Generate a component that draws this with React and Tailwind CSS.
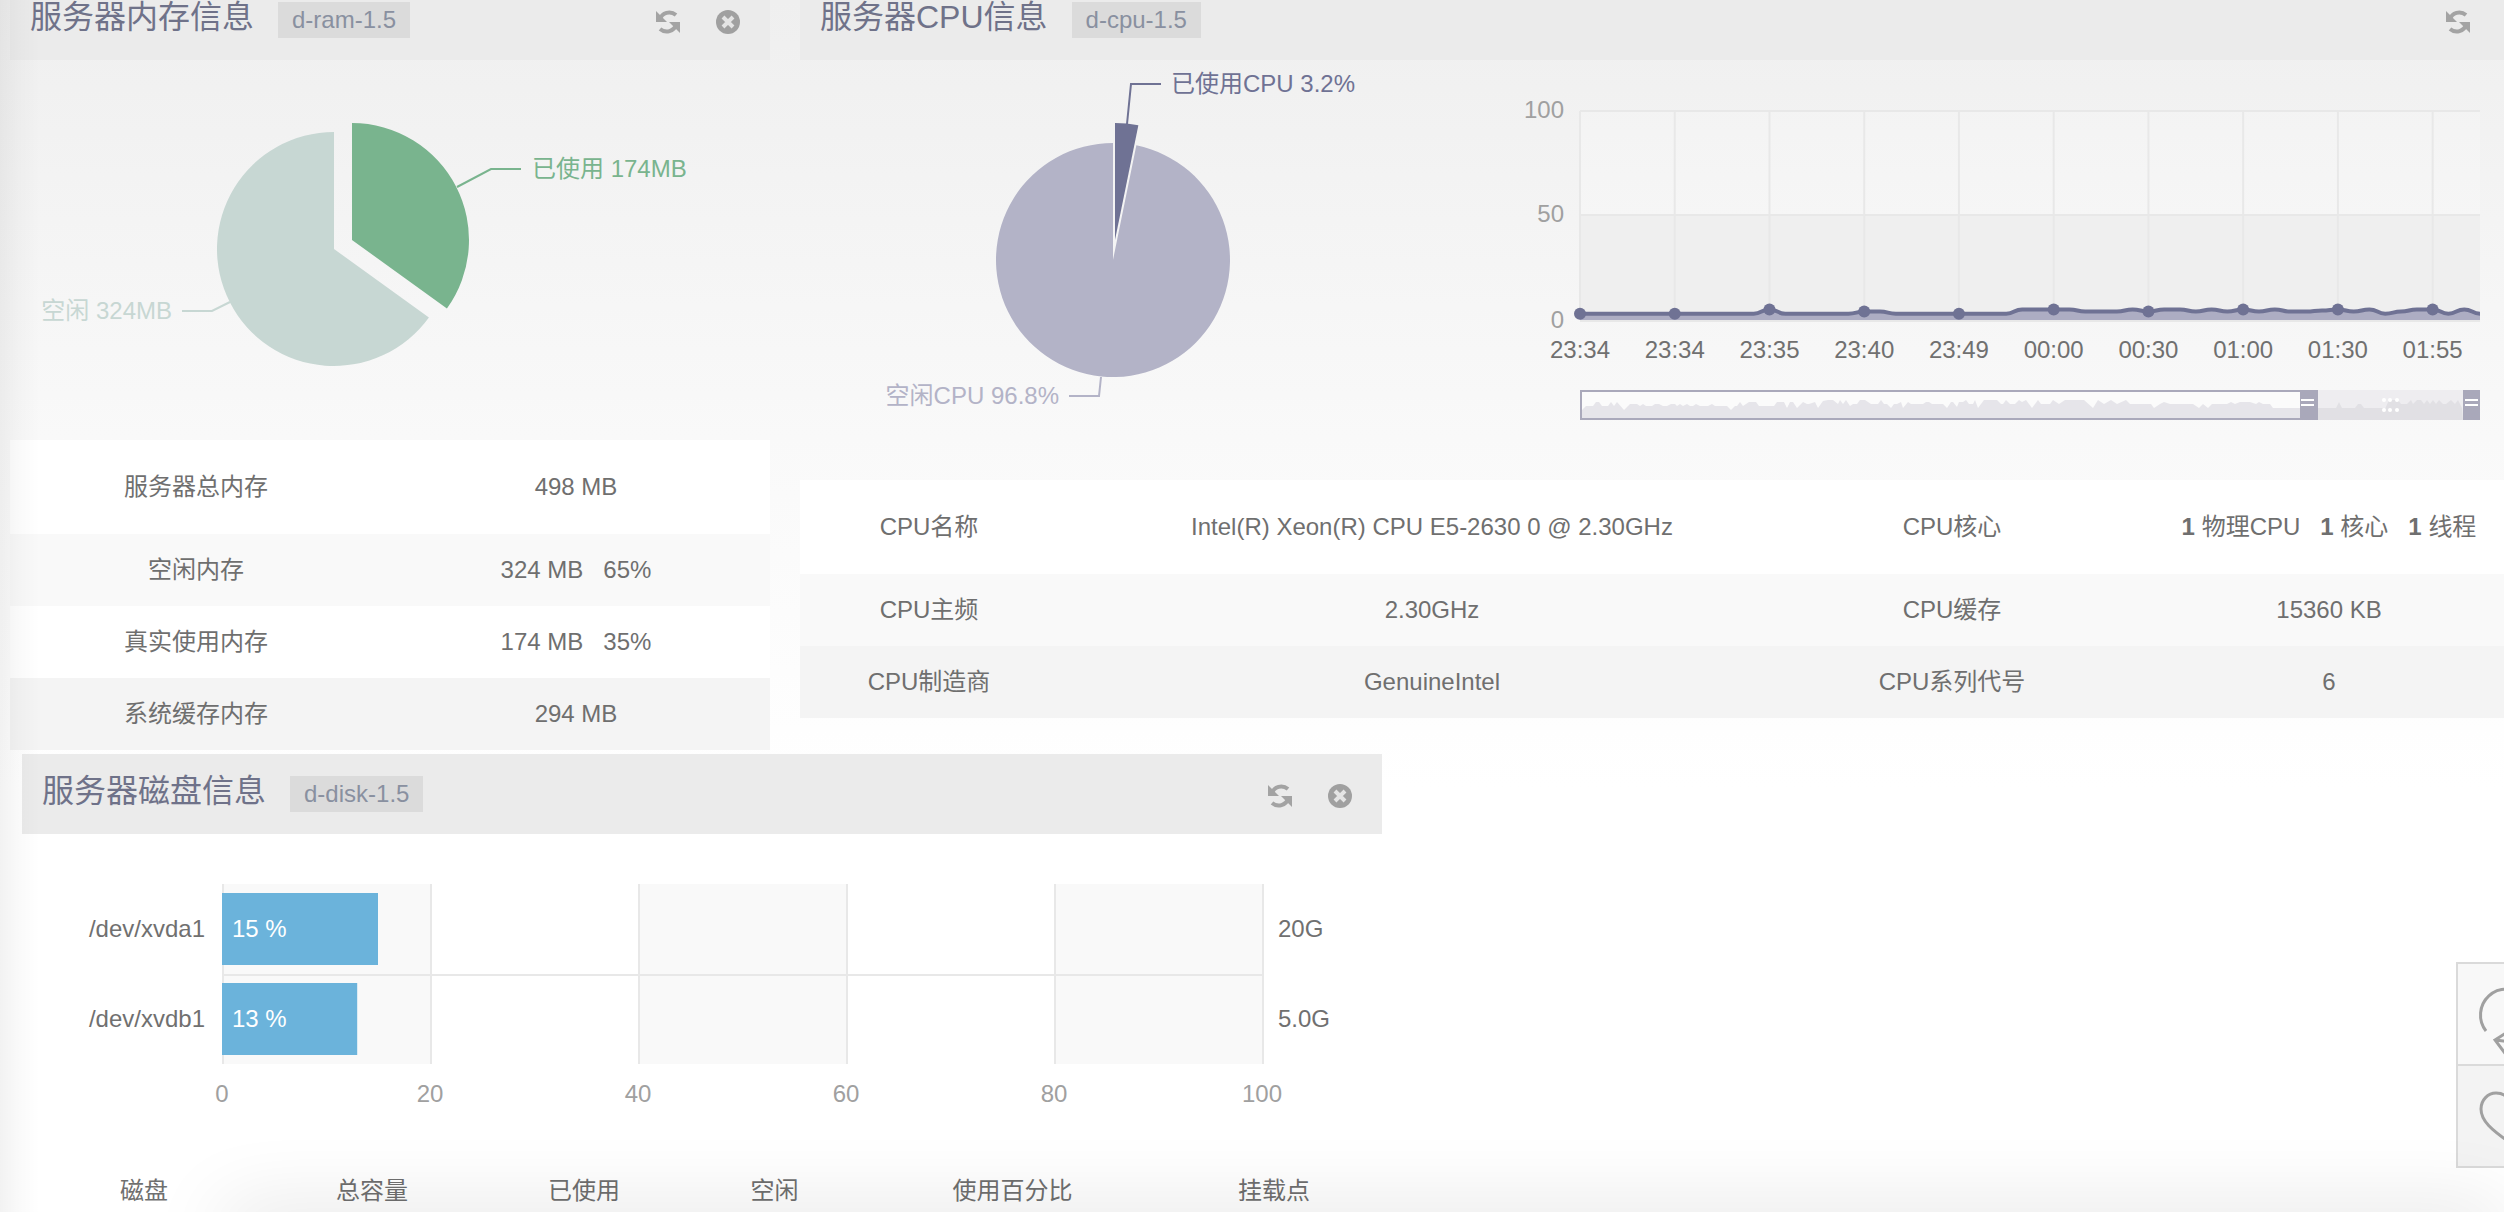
const ramRows = [
  { label: '服务器总内存', values: ['498 MB'] },
  { label: '空闲内存', values: ['324 MB', '65%'] },
  { label: '真实使用内存', values: ['174 MB', '35%'] },
  { label: '系统缓存内存', values: ['294 MB'] },
];

const cpuCores = [
  { count: 1, unit: '物理CPU' },
  { count: 1, unit: '核心' },
  { count: 1, unit: '线程' },
];

const disks = [
  { name: '/dev/xvda1', used: 15, size: '20G' },
  { name: '/dev/xvdb1', used: 13, size: '5.0G' },
];

const diskColumns = [
  { label: '磁盘', width: 'w-[244px]' },
  { label: '总容量', width: 'w-[212px]' },
  { label: '已使用', width: 'w-[212px]' },
  { label: '空闲', width: 'w-[169px]' },
  { label: '使用百分比', width: '' },
  { label: '挂载点', width: 'w-[216px]' },
];

const cpuTimes = ['23:34', '23:34', '23:35', '23:40', '23:49', '00:00', '00:30', '01:00', '01:30', '01:55'];

// cpu load in percent, a time label on every sixth sample
const cpuLoad = [
  3, 3, 3, 3, 3, 3, 3, 3, 3, 3, 3, 3, 5, 3, 3, 3, 3, 3, 4, 4,
  3, 3, 3, 3, 3, 3, 3, 3, 5, 5, 5, 5, 4, 4, 4, 5, 4, 5, 5, 4,
  5, 4, 5, 4, 5, 4, 4, 4.5, 5, 4, 5, 3, 4, 5, 5, 3, 5, 3,
];

// whole history for the zoom bar
const history =
  '2,20 6,16 13,16 16,12 19,12 22,16 28,16 31,12 34,16 37,12 44,20 50,14 57,14 60,16 63,14 66,16 72,16 75,14 79,14 83,16 ' +
  '87,16 91,14 95,14 97,16 100,14 103,16 107,14 110,16 113,16 116,14 120,16 128,16 132,14 135,16 147,16 151,20 155,16 157,16 ' +
  '160,12 163,16 169,12 176,12 179,16 194,16 197,12 204,12 207,18 210,12 213,12 217,18 223,12 227,14 229,14 235,12 238,18 ' +
  '243,11 248,10 253,10 258,14 260,10 263,14 266,10 270,16 273,14 277,14 280,10 285,10 291,14 298,14 301,10 304,14 307,14 ' +
  '311,18 314,14 317,14 321,12 323,18 328,12 331,14 343,14 346,12 349,12 352,14 363,14 367,18 371,12 373,12 377,17 379,12 ' +
  '383,12 386,10 389,14 393,14 395,10 398,18 404,10 417,10 421,14 423,14 426,10 430,14 435,14 439,10 442,12 446,10 452,18 ' +
  '458,10 461,14 470,14 473,10 479,14 485,10 504,10 513,18 518,10 524,14 531,10 537,14 546,10 550,14 571,14 574,18 580,14 ' +
  '584,12 590,14 613,14 619,18 623,14 628,18 632,14 647,14 651,12 655,14 660,12 670,12 676,14 679,12 683,14 690,14 693,18 ' +
  '756,18 759,12 762,18 775,18 778,14 781,14 784,18 802,18 805,19 809,10 818,10 821,14 827,14 831,10 833,14 837,10 841,10 ' +
  '844,14 847,10 850,14 853,10 856,14 859,10 863,14 866,14 871,10 875,14 878,10 882,18';

function RefreshIcon() {
  return (
    <svg viewBox="0 0 24 24" className="size-6" fill="none">
      <path d="M4 9C6 3 14 0 20 5" stroke="#a3a3a3" strokeWidth="4" />
      <path d="M0 1V12H11Z" fill="#a3a3a3" />
      <path d="M20 15C18 21 10 24 4 19" stroke="#a3a3a3" strokeWidth="4" />
      <path d="M24 23V12H13Z" fill="#a3a3a3" />
    </svg>
  );
}

function CloseIcon() {
  return (
    <svg viewBox="0 0 24 24" className="size-6" fill="none">
      <circle cx="12" cy="12" r="12" fill="#a0a0a0" />
      <path d="M7 7L17 17M17 7L7 17" stroke="#e4e4e4" strokeWidth="4" />
    </svg>
  );
}

function PanelHeader({ title, tag }) {
  return (
    <header className="h-20 px-5 flex items-start bg-[#ebebeb]">
      <h2 className="mt-[21px] text-[32px] leading-8 text-[#6f7289]">{title}</h2>
      <span className="mt-[22px] ml-6 px-[14px] text-2xl leading-9 bg-[#dbdbdb] text-[#8990a0]">{tag}</span>
      <div className="mt-[30px] ml-auto mr-[10px] flex gap-9">
        <button type="button" aria-label="刷新" className="cursor-pointer">
          <RefreshIcon />
        </button>
        <button type="button" aria-label="关闭" className="cursor-pointer">
          <CloseIcon />
        </button>
      </div>
    </header>
  );
}

// slice of a pie, angles in degrees clockwise from the top
function slicePath(cx, cy, r, from, to) {
  const point = (deg) => {
    const a = (deg * Math.PI) / 180;
    return `${cx + r * Math.sin(a)} ${cy - r * Math.cos(a)}`;
  };
  return `M${cx} ${cy}L${point(from)}A${r} ${r} 0 ${to - from > 180 ? 1 : 0} 1 ${point(to)}Z`;
}

function RamPie() {
  const split = (174 / 498) * 360;
  return (
    <svg viewBox="0 0 760 380" className="block w-full h-[380px] text-2xl" fill="none" strokeWidth="2">
      <path d={slicePath(324, 189, 117, split, 360)} fill="#c7d7d3" />
      <path d={slicePath(342, 180, 117, 0, split)} fill="#79b48e" />
      <path d="M447 127L481 109H511" stroke="#79b48e" />
      <text x="522" y="117" fill="#79b48e">已使用 174MB</text>
      <path d="M220 242L202 251H172" stroke="#c7d7d3" />
      <text x="162" y="259" textAnchor="end" fill="#c7d7d3">空闲 324MB</text>
    </svg>
  );
}

function CpuPie() {
  const split = 0.032 * 360;
  return (
    <svg viewBox="0 0 700 420" className="block w-full h-[420px] text-2xl" fill="none" strokeWidth="2">
      <path d={slicePath(313, 200, 117, split, 360)} fill="#b3b3c7" />
      <path d={slicePath(315, 180, 117, 0, split)} fill="#6f7294" />
      <path d="M327 64L331 24H361" stroke="#6f7294" />
      <text x="371" y="32" fill="#6f7294">已使用CPU 3.2%</text>
      <path d="M301 317L299 336H269" stroke="#b3b3c7" />
      <text x="259" y="344" textAnchor="end" fill="#b3b3c7">空闲CPU 96.8%</text>
    </svg>
  );
}

function CpuLoadChart() {
  const step = 900 / (cpuLoad.length - 1);
  const px = (i) => 80 + i * step;
  const py = (v) => 260 - v * 2.1;
  const line = cpuLoad
    .map((v, i) => {
      if (i === 0) return `M${px(0)} ${py(v)}`;
      const mid = px(i) - step / 2;
      return `C${mid} ${py(cpuLoad[i - 1])} ${mid} ${py(v)} ${px(i)} ${py(v)}`;
    })
    .join('');

  return (
    <svg viewBox="0 0 1060 420" className="block w-full h-[420px] text-2xl" fill="none">
      <rect x="80" y="51" width="900" height="104" fill="#ffffff" fillOpacity="0.2" />
      <rect x="80" y="155" width="900" height="106" fill="#efefef" />
      <g stroke="#e8e8e8" strokeWidth="2">
        {[51, 155, 261].map((y) => (
          <path key={y} d={`M80 ${y}H980`} />
        ))}
        {cpuTimes.map((t, i) => (
          <path key={i} d={`M${px(i * 6)} 51V260`} />
        ))}
      </g>
      <path d={`${line}V260H80Z`} fill="#adadc3" />
      <path d={line} stroke="#6f7294" strokeWidth="4" />
      {cpuTimes.map((t, i) => (
        <circle key={i} cx={px(i * 6)} cy={py(cpuLoad[i * 6])} r="6" fill="#6f7294" />
      ))}
      <g fill="#a0a0a0" textAnchor="end">
        <text x="64" y="58">100</text>
        <text x="64" y="162">50</text>
        <text x="64" y="268">0</text>
      </g>
      <g fill="#707070" textAnchor="middle">
        {cpuTimes.map((t, i) => (
          <text key={i} x={px(i * 6)} y="298">{t}</text>
        ))}
      </g>

      {/* zoom bar */}
      <g transform="translate(80 330)">
        <rect width="900" height="30" fill="#fbfbfb" />
        <polygon points={`0,30 ${history} 882,30`} fill="#e6e5ea" />
        <rect x="1" y="1" width="898" height="28" stroke="#aaa9bb" strokeWidth="2" />
        <rect x="738" width="145" height="30" fill="#eeedf0" />
        <svg x="738" width="145" height="30" viewBox="738 0 145 30">
          <polygon points={`0,30 ${history} 883,30`} fill="#e1e0e4" />
        </svg>
        <rect x="720" width="18" height="30" fill="#a9a8ba" />
        <rect x="883" width="17" height="30" fill="#a9a8ba" />
        <path d="M721 10H734M721 15H734M885 10H898M885 15H898" stroke="#ffffff" strokeWidth="2" />
        {[804, 810, 817].map((x) => (
          <g key={x} fill="#ffffff">
            <circle cx={x} cy="10" r="2" />
            <circle cx={x} cy="20" r="2" />
          </g>
        ))}
      </g>
    </svg>
  );
}

function DiskChart() {
  const ticks = [0, 20, 40, 60, 80, 100];
  return (
    <svg viewBox="0 0 1360 310" className="block w-full h-[310px] text-2xl" fill="none">
      {[200, 616, 1032].map((x) => (
        <rect key={x} x={x} y="50" width="208" height="180" fill="#f9f9f9" />
      ))}
      <path d="M200 141H1242" stroke="#e8e8e8" strokeWidth="2" />
      {ticks.map((t) => (
        <g key={t}>
          <path d={`M${201 + t * 10.4} 50V230`} stroke="#e8e8e8" strokeWidth="2" />
          <text x={200 + t * 10.4} y="268" fill="#a0a0a0" textAnchor="middle">{t}</text>
        </g>
      ))}
      {disks.map((disk, i) => (
        <g key={disk.name} transform={`translate(0 ${i * 90})`}>
          <rect x="200" y="59" width={disk.used * 10.4} height="72" fill="#6bb3db" />
          <text x="183" y="103" fill="#707070" textAnchor="end">{disk.name}</text>
          <text x="210" y="103" fill="#ffffff">{disk.used} %</text>
          <text x="1256" y="103" fill="#707070">{disk.size}</text>
        </g>
      ))}
    </svg>
  );
}

function RamPanel() {
  return (
    <section>
      <PanelHeader title="服务器内存信息" tag="d-ram-1.5" />
      <RamPie />
      <table className="w-full table-fixed text-center">
        <tbody>
          {ramRows.map((row) => (
            <tr
              key={row.label}
              className="h-[72px] first:h-[94px] odd:bg-white nth-2:bg-[#f9f9f9] nth-4:bg-[#f4f4f4]"
            >
              <th scope="row" className="pr-2 font-normal">{row.label}</th>
              <td className="pr-2">
                <span className="inline-flex gap-5">
                  {row.values.map((v) => (
                    <span key={v}>{v}</span>
                  ))}
                </span>
              </td>
            </tr>
          ))}
        </tbody>
      </table>
    </section>
  );
}

function CpuPanel() {
  return (
    <section>
      <PanelHeader title="服务器CPU信息" tag="d-cpu-1.5" />
      <div className="grid grid-cols-[700fr_1060fr]">
        <CpuPie />
        <CpuLoadChart />
      </div>
      <table className="w-full table-fixed text-center">
        <tbody>
          <tr className="h-[94px] bg-white">
            <th scope="row" className="w-[258px] font-normal">CPU名称</th>
            <td>Intel(R) Xeon(R) CPU E5-2630 0 @ 2.30GHz</td>
            <th scope="row" className="w-[292px] font-normal">CPU核心</th>
            <td className="w-[462px]">
              <span className="inline-flex gap-5">
                {cpuCores.map((core) => (
                  <span key={core.unit}>
                    <b>{core.count}</b> {core.unit}
                  </span>
                ))}
              </span>
            </td>
          </tr>
          <tr className="h-[72px] bg-[#f9f9f9]">
            <th scope="row" className="font-normal">CPU主频</th>
            <td>2.30GHz</td>
            <th scope="row" className="font-normal">CPU缓存</th>
            <td>15360 KB</td>
          </tr>
          <tr className="h-[72px] bg-[#f4f4f4]">
            <th scope="row" className="font-normal">CPU制造商</th>
            <td>GenuineIntel</td>
            <th scope="row" className="font-normal">CPU系列代号</th>
            <td>6</td>
          </tr>
        </tbody>
      </table>
    </section>
  );
}

function DiskPanel() {
  return (
    <section>
      <PanelHeader title="服务器磁盘信息" tag="d-disk-1.5" />
      <DiskChart />
      <table className="w-full table-fixed text-center">
        <thead>
          <tr className="h-[94px]">
            {diskColumns.map((col) => (
              <th key={col.label} scope="col" className={`font-normal ${col.width}`}>
                {col.label}
              </th>
            ))}
          </tr>
        </thead>
      </table>
    </section>
  );
}

function SideButtons() {
  return (
    <div className="fixed -right-14 bottom-11 w-[104px] border-2 border-[#dadada]">
      <button
        type="button"
        aria-label="分享"
        className="block w-full h-[102px] border-b-2 border-[#dadada] bg-[#f8f8f8] cursor-pointer"
      >
        <svg viewBox="0 0 100 100" className="block size-[100px]" fill="none" stroke="#a0a0a0" strokeWidth="3">
          <path d="M28 67A26 26 0 1 1 69 67" />
          <path d="M37 76L62 60L55 100ZM37 76L62 79" />
        </svg>
      </button>
      <button type="button" aria-label="收藏" className="block w-full h-[100px] bg-[#f3f3f3] cursor-pointer">
        <svg viewBox="0 0 100 100" className="block size-[100px]" fill="none" stroke="#a0a0a0" strokeWidth="3">
          <path d="M51 76C34 64 23 55 23 43C23 34 30 27 38 27C44 27 49 30 51 35C53 30 58 27 64 27C72 27 79 34 79 43C79 55 68 64 51 76Z" />
        </svg>
      </button>
    </div>
  );
}

export default function App() {
  return (
    <div className="relative h-screen overflow-hidden bg-linear-to-b from-[#efefef] via-[#f9f9f9] via-36% to-white to-65% font-['Liberation_Sans','Noto_Sans_CJK_SC',sans-serif] text-2xl text-[#6f6f6f]">
      <main className="-mt-5 -mr-14">
        <div className="pl-[10px] grid grid-cols-[760fr_1760fr] items-start gap-[30px]">
          <RamPanel />
          <CpuPanel />
        </div>
        <div className="mt-1 pl-[22px] grid grid-cols-[1360fr_1178fr]">
          <DiskPanel />
        </div>
      </main>
      <SideButtons />
      {/* soft shadows of the window's left and bottom edges */}
      <div className="absolute inset-y-0 left-0 w-10 bg-linear-to-r from-black/5 via-black/2 to-transparent pointer-events-none" />
      <div className="absolute top-full left-56 right-0 h-10 shadow-[0_0_80px_rgba(0,0,0,0.14)] pointer-events-none" />
    </div>
  );
}
